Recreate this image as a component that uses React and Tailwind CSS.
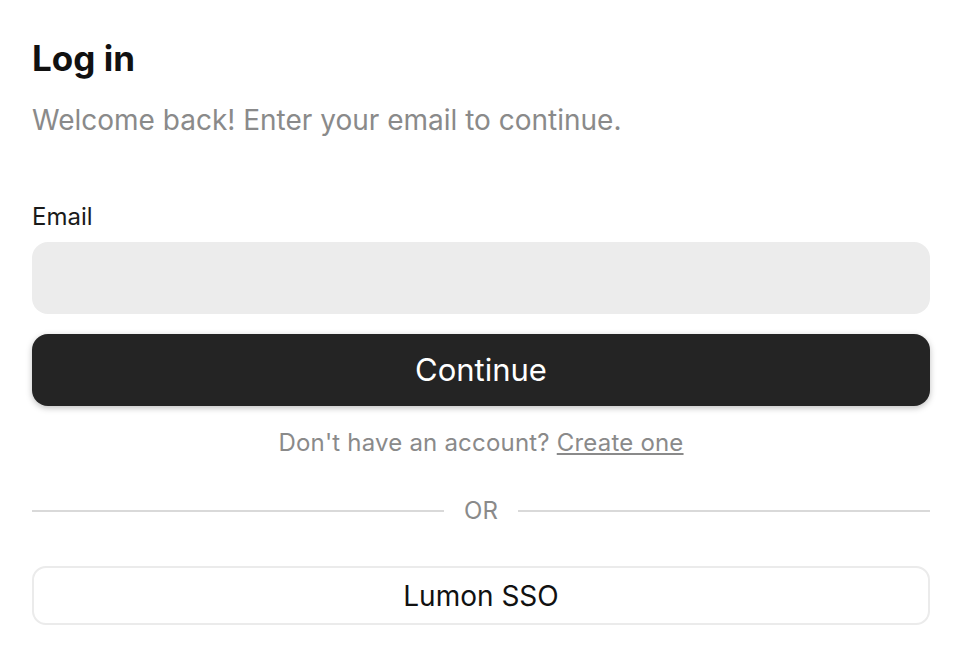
import React from 'react';

const App = () => {
  return (
    <div className="min-h-[662px] w-[966px] bg-white pl-8 pr-9 pt-[36px] font-['Inter',sans-serif]">
      <h1 className="text-[35px] font-bold leading-[44px] text-[#111111]">Log in</h1>
      <p className="mt-[21px] text-[28px] leading-[38px] text-[#8a8a8a]">
        Welcome back! Enter your email to continue.
      </p>

      <label className="mt-[62px] block text-[24px] leading-[32px] text-[#1a1a1a]">
        Email
      </label>
      <input
        type="email"
        className="mt-[9px] block h-[72px] w-full rounded-[16px] bg-[#ececec] px-5 text-[22px] outline-none"
      />

      <button className="mt-[20px] flex h-[72px] w-full items-center justify-center rounded-[16px] bg-[#242424] text-[31px] text-white shadow-[0_2px_6px_rgba(0,0,0,0.25)]">
        Continue
      </button>

      <p className="mt-[21px] text-center text-[24px] leading-[32px] tracking-[0.2px] text-[#8a8a8a]">
        Don't have an account?{' '}
        <a href="#" className="underline">Create one</a>
      </p>

      <div className="mt-[36px] flex items-center gap-5">
        <div className="h-[2px] flex-1 bg-[#d9d9d9]" />
        <span className="text-[24px] leading-[32px] text-[#8a8a8a]">OR</span>
        <div className="h-[2px] flex-1 bg-[#d9d9d9]" />
      </div>

      <button className="mt-[39px] flex h-[59px] w-full items-center justify-center rounded-[14px] border-2 border-[#ebebeb] bg-white text-[28px] text-[#111111]">
        Lumon SSO
      </button>
    </div>
  );
};

export default App;
